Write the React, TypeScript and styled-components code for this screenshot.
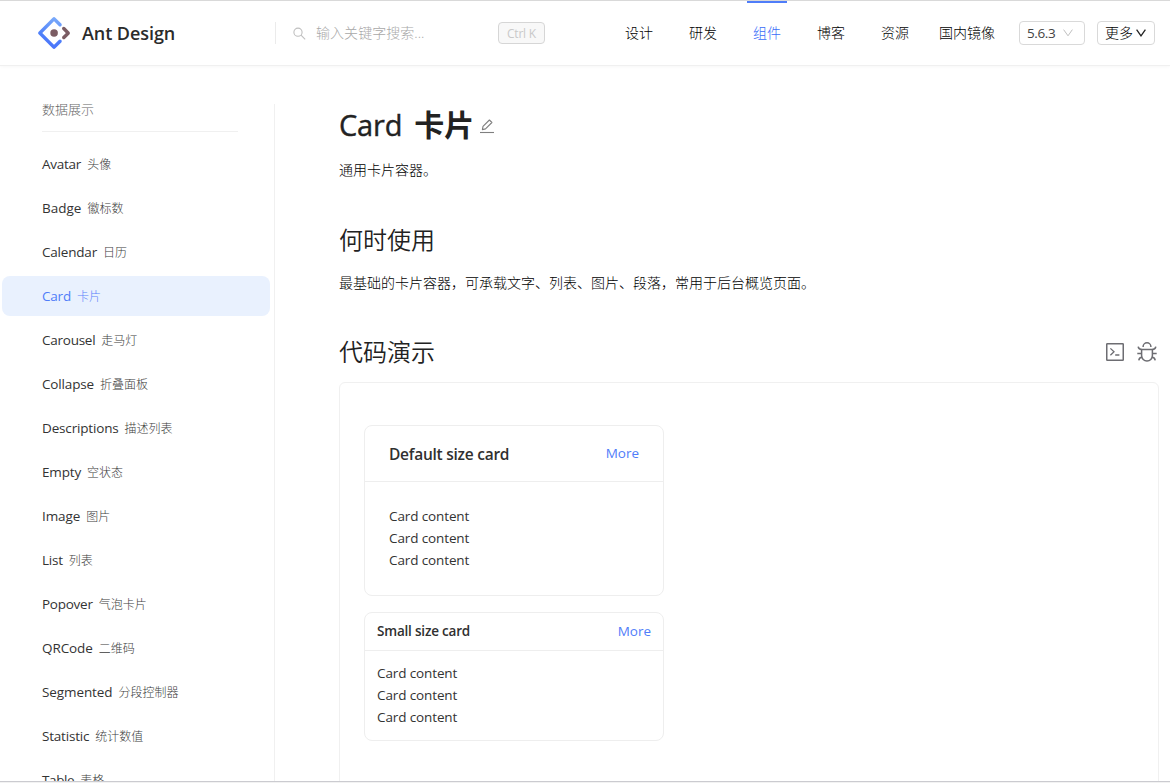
import React from "react";
import styled, { createGlobalStyle } from "styled-components";

const latin = `"Open Sans", "Noto Sans CJK SC", sans-serif`;
const blue = "#4f7df9";

const GlobalStyle = createGlobalStyle`
  * { box-sizing: border-box; }
  html, body { margin: 0; height: 100%; overflow: hidden; background: #fff; }
  body { font-family: ${latin}; font-size: 14px; line-height: 22px; color: #222; }
  #root { height: 100%; }
  svg { display: block; flex: none; }
`;

const Page = styled.div`
  height: 783px;
  width: 1170px;
  display: flex;
  flex-direction: column;
  border-top: 1px solid #d9d9d9;
  overflow: hidden;
`;

const Header = styled.header`
  height: 65px;
  flex: none;
  display: flex;
  align-items: center;
  padding: 0 15px 0 38px;
  border-bottom: 1px solid #f0f0f0;
  box-shadow: 0 1px 3px rgba(0, 0, 0, 0.03);
`;

const Brand = styled.a`
  display: flex;
  align-items: center;
  gap: 12px;
  width: 237px;
`;

const BrandName = styled.span`
  font-size: 18px;
  font-weight: 600;
  line-height: 32px;
  letter-spacing: -0.07px;
  white-space: nowrap;
  color: #2b2b2b;
`;

const Search = styled.div`
  display: flex;
  align-items: center;
  width: 270px;
  height: 22px;
  padding-left: 17px;
  border-left: 1px solid #ebebeb;
  color: #a8a8a8;
`;

const Placeholder = styled.span`
  flex: 1;
  margin-left: 10px;
  font-weight: 300;
  letter-spacing: 0.05px;
`;

const Shortcut = styled.kbd`
  display: grid;
  place-items: center;
  width: 47px;
  height: 22px;
  border: 1px solid #d6d6d6;
  border-radius: 4px;
  background: #f8f8f8;
  color: #c9c9c9;
  font-family: ${latin};
  font-size: 12px;
  letter-spacing: -0.2px;
`;

const Nav = styled.nav`
  display: flex;
  height: 100%;
  gap: 24px;
  margin-left: 74px;
`;

const NavItem = styled.a<{ $active?: boolean; $wide?: boolean }>`
  width: ${(p) => (p.$wide ? 68 : 40)}px;
  margin-left: ${(p) => (p.$wide ? -6 : 0)}px;
  text-align: center;
  line-height: 59px;
  font-weight: 300;
  border-top: 2px solid ${(p) => (p.$active ? blue : "transparent")};
  color: ${(p) => (p.$active ? "#3a6cf8" : "#000")};
`;

const SmallButton = styled.button<{ $w: number; $gap: number }>`
  display: flex;
  align-items: center;
  width: ${(p) => p.$w}px;
  height: 24px;
  gap: ${(p) => p.$gap}px;
  margin-left: 12px;
  padding: 0 7px;
  border: 1px solid #d9d9d9;
  border-radius: 4px;
  background: #fff;
  color: #000;
  font: 300 14px/22px ${latin};
`;

const Version = styled(SmallButton)`
  margin-left: 18px;
  font-weight: 400;
  font-size: 13.5px;
  letter-spacing: -0.4px;
  color: #444;
`;

const Body = styled.div`
  flex: 1;
  min-height: 0;
  display: flex;
  padding-top: 38px;
`;

const Sidebar = styled.aside`
  width: 275px;
  border-right: 1px solid #f0f0f0;
  overflow: hidden;
`;

const GroupTitle = styled.div`
  height: 28px;
  margin: 0 36px 12px 42px;
  border-bottom: 1px solid #f0f0f0;
  color: #666;
  font-size: 13px;
  font-weight: 300;
  line-height: 10px;
`;

const MenuItem = styled.a<{ $active?: boolean }>`
  display: flex;
  align-items: center;
  height: 40px;
  margin: 0 4px 4px 2px;
  padding-left: 40px;
  gap: 6px;
  border-radius: 8px;
  background: ${(p) => (p.$active ? "#e9f1fe" : "transparent")};
  color: ${(p) => (p.$active ? blue : "#333")};
`;

const MenuName = styled.span<{ $ls: number }>`
  font-size: 13.5px;
  letter-spacing: ${(p) => p.$ls}px;
  white-space: nowrap;
`;

const MenuAlias = styled.span<{ $active?: boolean }>`
  padding-top: 2px;
  font-size: 12px;
  font-weight: 300;
  color: ${(p) => (p.$active ? "#5a82fa" : "#3c3c3c")};
`;

const Main = styled.main`
  flex: 1;
  min-width: 0;
  padding: 0 11px 0 64px;
`;

const Title = styled.h1`
  display: flex;
  align-items: center;
  height: 38px;
  margin: 2px 0 0;
  font-size: 29px;
  font-weight: 400;
  line-height: 38px;
`;

const TitleName = styled.span`
  letter-spacing: -0.2px;
  -webkit-text-stroke: 0.4px #222;
`;

const TitleAlias = styled.span`
  margin: 0 6px 0 12px;
  font-size: 30px;
  font-weight: 700;
`;

const TitleEdit = styled.a`
  padding-top: 2px;
`;

const Paragraph = styled.p`
  margin: 0;
  height: 28px;
  line-height: 28px;
  font-weight: 300;
  color: #000;
`;

const Intro = styled(Paragraph)`
  margin-top: 12px;
`;

const SectionTitle = styled.h2`
  display: flex;
  align-items: center;
  height: 32px;
  margin: 41px 0 12px;
  padding-bottom: 2px;
  font-size: 24px;
  font-weight: 350;
  line-height: 30px;
`;

const DemoTitle = styled(SectionTitle)`
  margin: 40px 0 13px;
`;

const Tools = styled.div`
  display: flex;
  gap: 12px;
  margin: 0 2px 0 auto;
`;

const Demo = styled.section`
  height: 500px;
  display: flex;
  flex-direction: column;
  gap: 16px;
  padding: 42px 24px;
  border: 1px solid #f0f0f0;
  border-radius: 6px;
`;

const CardBox = styled.article`
  flex: none;
  width: 300px;
  border: 1px solid #eeeeee;
  border-radius: 8px;
`;

const CardHead = styled.div<{ $small?: boolean }>`
  display: flex;
  align-items: center;
  justify-content: space-between;
  height: ${(p) => (p.$small ? 38 : 56)}px;
  padding: 0 ${(p) => (p.$small ? 12 : 24)}px;
  padding-bottom: ${(p) => (p.$small ? 2 : 0)}px;
  border-bottom: 1px solid #eeeeee;
`;

const CardTitle = styled.span<{ $small?: boolean }>`
  font-size: ${(p) => (p.$small ? 13.5 : 15.5)}px;
  font-weight: 600;
  letter-spacing: ${(p) => (p.$small ? -0.2 : -0.25)}px;
  color: #303030;
`;

const More = styled.a<{ $small?: boolean }>`
  padding-bottom: ${(p) => (p.$small ? 0 : 2)}px;
  color: ${blue};
  font-size: 13.5px;
`;

const CardBody = styled.div<{ $small?: boolean }>`
  padding: ${(p) => (p.$small ? "11px 12px 12px" : "23px 24px 24px")};
  font-size: 13.5px;
  letter-spacing: -0.12px;
  color: #333;
`;

const Line = styled.div`
  height: 22px;
`;

const BottomEdge = styled.footer`
  flex: none;
  height: 2px;
  border-top: 1px solid #cbcbd0;
  background: #f2f2f2;
`;

const Logo = () => (
  <svg width="32" height="32" viewBox="0 0 200 200">
    <defs>
      <linearGradient id="ring" x1="0.6" y1="0" x2="0.4" y2="1">
        <stop offset="0" stopColor="#7aaafa" />
        <stop offset="0.6" stopColor="#4f80fa" />
        <stop offset="1" stopColor="#4a72fa" />
      </linearGradient>
    </defs>
    <path fill="url(#ring)" d="M91.588 4.177 4.18 91.513c-4.7 4.695-4.7 12.279 0 16.974l87.408 87.336c4.7 4.696 12.29 4.696 16.989 0l36.648-36.618c4.209-4.205 4.209-11.023 0-15.228s-11.031-4.205-15.24 0l-27.783 27.76c-1.17 1.169-2.945 1.169-4.114 0l-69.802-69.744c-1.17-1.169-1.17-2.942 0-4.111l69.802-69.744c1.169-1.169 2.944-1.169 4.114 0l27.783 27.76c4.209 4.205 11.032 4.205 15.24 0s4.209-11.022 0-15.227L108.58 4.056c-4.718-4.594-12.311-4.557-16.992.12Z" />
    <path fill="#7b5c63" d="M153.686 135.855c4.208 4.205 11.031 4.205 15.24 0l27.034-27.012c4.7-4.696 4.7-12.28 0-16.974l-27.27-27.151c-4.218-4.2-11.043-4.194-15.254.014s-4.209 11.022 0 15.227l18.418 18.403c1.17 1.17 1.17 2.943 0 4.111l-18.168 18.154c-4.209 4.205-4.209 11.023 0 15.228Z" />
    <ellipse fill="#7b5c63" cx="100.52" cy="100.44" rx="23.6" ry="23.58" />
  </svg>
);

const SearchIcon = () => (
  <svg width="13" height="13" viewBox="0 0 13 13" fill="none" stroke="#bfbfbf" strokeWidth="1.1">
    <circle cx="5" cy="5.2" r="4.1" />
    <path d="M8 8.2 12.2 12.4" />
  </svg>
);

const Chevron = ({ color }: { color: string }) => (
  <svg width="10" height="8" viewBox="0 0 10 8" fill="none" stroke={color} strokeWidth={color === "#222" ? 1.3 : 1}>
    <path d="M.6.6 5 6.8 9.4.6" />
  </svg>
);

const EditIcon = () => (
  <svg width="14" height="15" viewBox="0 0 14 15" fill="none" stroke="#7f7f7f" strokeWidth="1.1">
    <path d="M3 7.4 9.4 1 11.9 3.5 5.5 9.9 2.4 10.6Z" strokeLinejoin="round" />
    <path d="M0 13.5H14" />
  </svg>
);

const TerminalIcon = () => (
  <svg width="20" height="20" viewBox="0 0 20 20" fill="none" stroke="#6d6d72" strokeWidth="1.5">
    <rect x="1.75" y="1.75" width="16.5" height="16.5" rx=".6" />
    <path d="M5.4 6.4 9 9.8 5.4 13.2M10.2 13H14.4" strokeWidth="1.3" />
  </svg>
);

const BugIcon = () => (
  <svg width="20" height="20" viewBox="0 0 20 20" fill="none" stroke="#6d6d72" strokeWidth="1.5">
    <path d="M6.1 5V4.7a3.9 3.9 0 0 1 7.8 0V5" />
    <path d="M4.6 7.4H15.4V13.6a5.4 5.4 0 0 1-10.8 0Z" />
    <path d="M1.2 4.6C1.4 6.5 2.6 7.4 4.6 7.4M18.8 4.6C18.6 6.5 17.4 7.4 15.4 7.4M.3 11.4H4.6M15.4 11.4H19.7M1.8 18.4C2 16.4 3.2 15.3 5 15.2M18.2 18.4C18 16.4 16.8 15.3 15 15.2" />
  </svg>
);

const navItems = ["设计", "研发", "组件", "博客", "资源", "国内镜像"];

const menu: [string, string, number][] = [
  ["Avatar", "头像", -0.25],
  ["Badge", "徽标数", 0],
  ["Calendar", "日历", -0.2],
  ["Card", "卡片", -0.2],
  ["Carousel", "走马灯", -0.25],
  ["Collapse", "折叠面板", -0.15],
  ["Descriptions", "描述列表", -0.16],
  ["Empty", "空状态", -0.15],
  ["Image", "图片", -0.1],
  ["List", "列表", -0.25],
  ["Popover", "气泡卡片", -0.25],
  ["QRCode", "二维码", -0.1],
  ["Segmented", "分段控制器", -0.1],
  ["Statistic", "统计数值", -0.2],
  ["Table", "表格", -0.4],
];

const DemoCard = ({ title, small }: { title: string; small?: boolean }) => (
  <CardBox>
    <CardHead $small={small}>
      <CardTitle $small={small}>{title}</CardTitle>
      <More $small={small}>More</More>
    </CardHead>
    <CardBody $small={small}>
      {[0, 1, 2].map((i) => (
        <Line key={i}>Card content</Line>
      ))}
    </CardBody>
  </CardBox>
);

export default function App() {
  return (
    <Page>
      <GlobalStyle />
      <Header>
        <Brand>
          <Logo />
          <BrandName>Ant Design</BrandName>
        </Brand>
        <Search>
          <SearchIcon />
          <Placeholder>输入关键字搜索...</Placeholder>
          <Shortcut>Ctrl K</Shortcut>
        </Search>
        <Nav>
          {navItems.map((n) => (
            <NavItem key={n} $active={n === "组件"} $wide={n.length > 2}>
              {n}
            </NavItem>
          ))}
        </Nav>
        <Version $w={66} $gap={8}>
          5.6.3
          <Chevron color="#bfbfbf" />
        </Version>
        <SmallButton $w={58} $gap={3}>
          更多
          <Chevron color="#222" />
        </SmallButton>
      </Header>
      <Body>
        <Sidebar>
          <GroupTitle>数据展示</GroupTitle>
          {menu.map(([name, alias, ls]) => (
            <MenuItem key={name} $active={name === "Card"}>
              <MenuName $ls={ls}>{name}</MenuName>
              <MenuAlias $active={name === "Card"}>{alias}</MenuAlias>
            </MenuItem>
          ))}
        </Sidebar>
        <Main>
          <Title>
            <TitleName>Card</TitleName>
            <TitleAlias>卡片</TitleAlias>
            <TitleEdit>
              <EditIcon />
            </TitleEdit>
          </Title>
          <Intro>通用卡片容器。</Intro>
          <SectionTitle>何时使用</SectionTitle>
          <Paragraph>最基础的卡片容器，可承载文字、列表、图片、段落，常用于后台概览页面。</Paragraph>
          <DemoTitle>
            代码演示
            <Tools>
              <TerminalIcon />
              <BugIcon />
            </Tools>
          </DemoTitle>
          <Demo>
            <DemoCard title="Default size card" />
            <DemoCard title="Small size card" small />
          </Demo>
        </Main>
      </Body>
      <BottomEdge />
    </Page>
  );
}
